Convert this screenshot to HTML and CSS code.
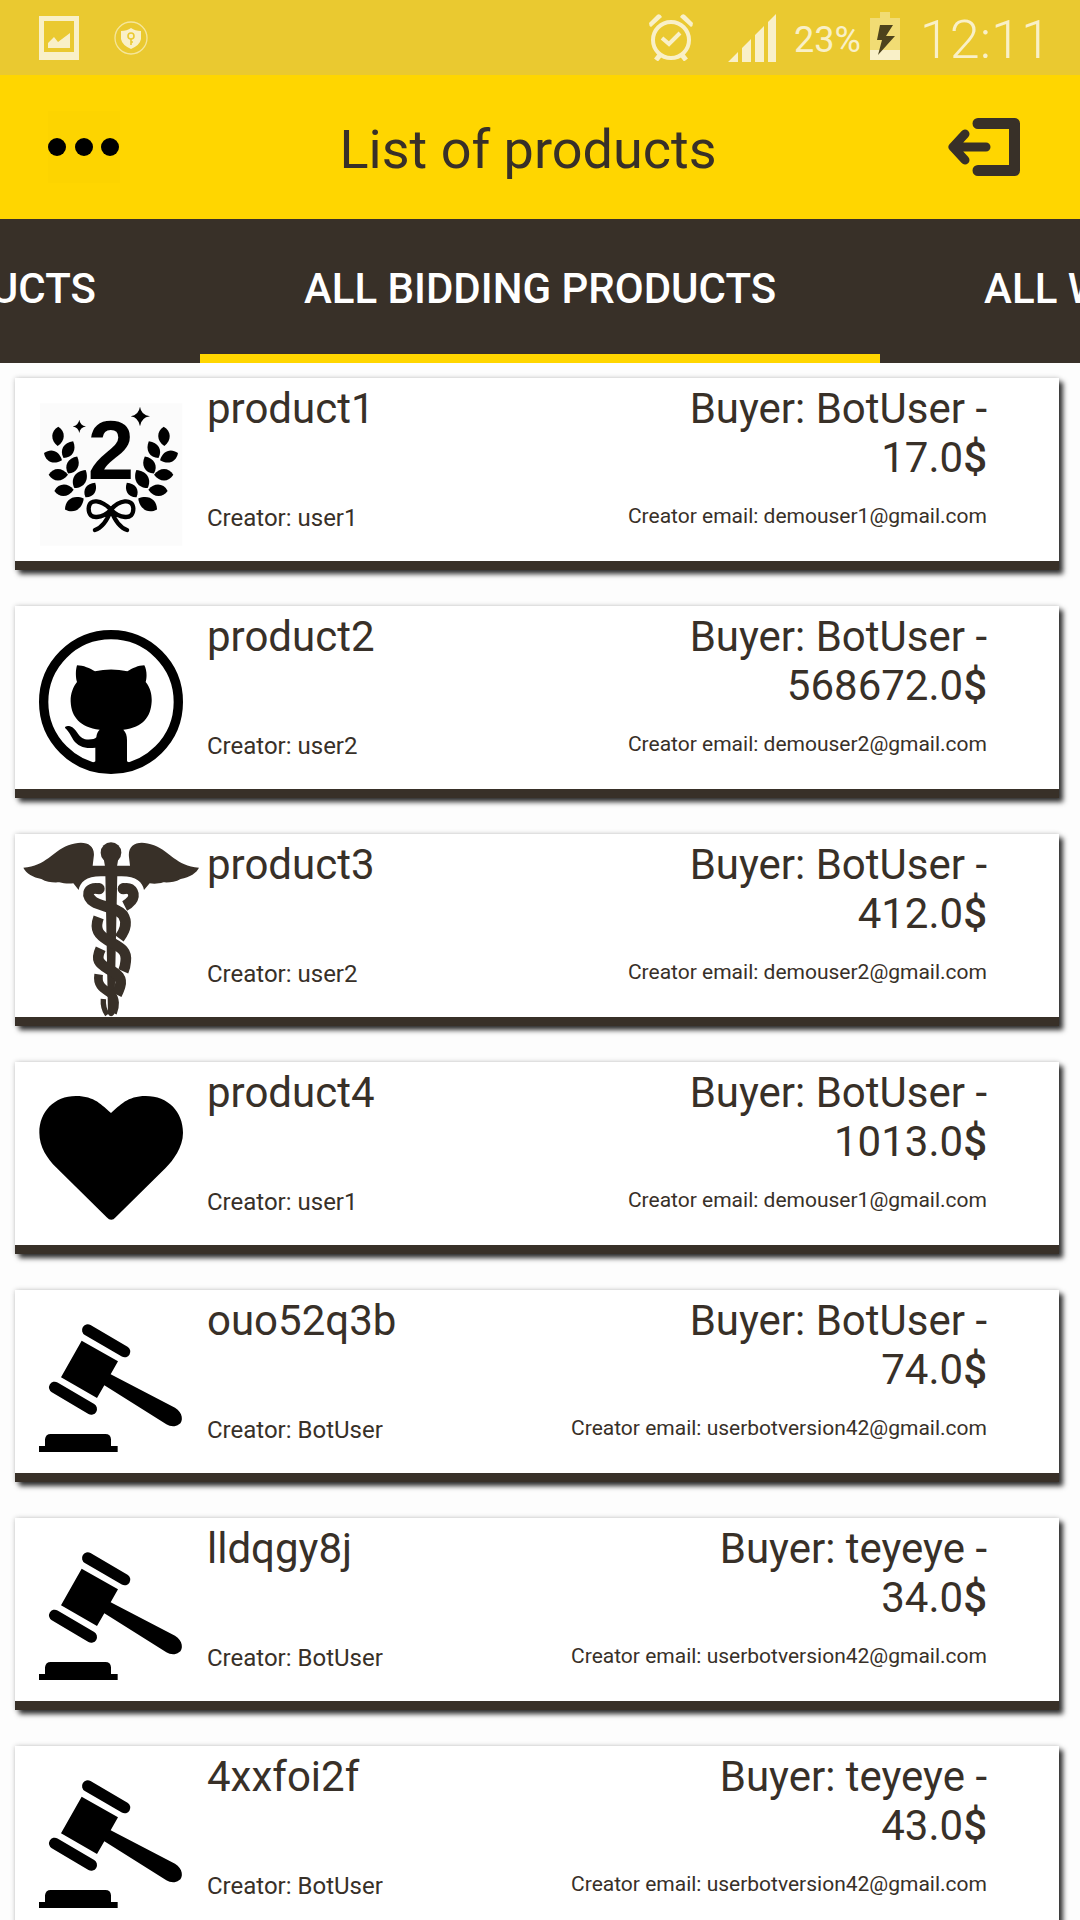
FILE: index.html
```html
<!DOCTYPE html>
<html lang="en">
<head>
<meta charset="utf-8">
<meta name="viewport" content="width=device-width, initial-scale=1">
<title>List of products</title>
<link rel="stylesheet" href="styles.css">
</head>
<body>
<svg class="sprite" aria-hidden="true">
  <symbol id="octocat" viewBox="69 42 528 525">
    <circle cx="333" cy="306" r="202" fill="none" stroke="#000" stroke-width="28"/>
    <path d="M231 196C250 196 270 205 285 214Q333 203 382 214C397 205 415 196 433 196C441 210 441 232 437 246C452 264 456 285 455 305C452 350 430 382 370 389C378 397 381 407 381 420V484L400 496H268L286 484V443C255 447 235 440 220 420C210 402 205 392 195 384C195 377 207 376 217 382C232 392 235 412 255 418C270 420 285 418 289 412C290 402 293 395 299 389C240 382 214 350 212 305C211 285 218 262 231 246C226 230 227 210 231 196Z"/>
  </symbol>
  <symbol id="caduceus" viewBox="69 66 528 525">
    <g fill="#383028">
      <circle cx="333" cy="98" r="31"/>
      <path d="M310 110H356L350 145H316ZM70 143C140 138 155 95 205 76C250 58 288 70 281 112L278 137H390L387 112C382 70 418 58 462 76C512 95 527 138 597 143C590 158 570 172 542 177C525 187 505 188 490 187C475 192 460 192 449 190L432 210C428 185 405 165 352 169H316C262 165 240 185 236 210L220 190C205 192 190 190 178 187C160 188 140 187 124 177C100 172 78 160 70 143ZM316 160H352L343 582Q333 596 324 582Z"/>
      <circle cx="297" cy="206" r="17"/>
      <circle cx="370" cy="206" r="17"/>
    </g>
    <g fill="none" stroke="#383028" stroke-width="32">
      <path d="M297 206C260 200 256 230 282 246C305 260 350 262 369 285C384 308 373 335 358 355"/>
      <path d="M370 206C399 200 408 226 394 242Q386 252 374 258"/>
      <path d="M296 292C282 330 297 345 325 362C360 382 382 390 377 425Q376 440 370 454"/>
      <path d="M302 386C286 420 297 430 325 447C355 463 368 475 360 500Q356 512 350 524"/>
      <path d="M296 463C290 500 315 508 333 522C347 536 346 560 338 578" stroke-width="26"/>
      <path d="M310 537Q308 565 322 584" stroke-width="16"/>
    </g>
  </symbol>
  <symbol id="heart" viewBox="69 60 528 525">
    <path d="M333 189C360 166 382 138 437 138C505 138 549 186 549 248C549 292 520 330 496 355L347 502Q334 517 320 502L168 352C142 325 118 292 118 248C118 186 162 138 228 138C284 138 306 166 333 189Z"/>
  </symbol>
  <symbol id="gavel" viewBox="69 84 528 525">
    <path d="M245 212L354 274L332 313L525 413C549 427 551 455 537 463C525 472 511 470 499 463L313 346L291 384L183 322ZM117 528H135V508Q137 492 152 492H316Q332 492 333 508V528H353V546H117Z"/>
    <path d="M263 180L374 245M164 352L274 417" stroke="#000" stroke-width="34" stroke-linecap="round"/>
  </symbol>
</svg>

<div class="app">
  <div class="status">
    <div class="status-group notices">
      <svg class="notice-photo" viewBox="0 0 40 44" aria-hidden="true"><path fill-rule="evenodd" d="M0 0H40V44H0ZM5 5V36H35V5Z" fill="#f9f0c8"/><path d="M9 32V27L15 21L19 26L31 17V32Z" fill="#f9f0c8"/></svg>
      <svg class="notice-shield" viewBox="0 0 34 34" aria-hidden="true"><circle cx="17" cy="17" r="16" fill="none" stroke="#f5e69b" stroke-width="1.3"/><path d="M17 7Q21 10 27 10V18Q26 24 17 28Q8 24 7 18V10Q13 10 17 7Z" fill="#f9f0c8"/><g fill="none" stroke="#eac930" stroke-width="1.6"><circle cx="17" cy="15" r="3"/><path d="M17 18V24M17 21H19"/></g></svg>
    </div>
    <div class="status-group">
      <svg class="alarm" viewBox="0 0 44 47" aria-hidden="true"><g fill="none" stroke="#f9f0c8"><circle cx="22" cy="26" r="18" stroke-width="4"/><path d="M13 24L20 30L31 19" stroke-width="4"/><path d="M11 41L7 46M33 41L37 46" stroke-width="5"/></g><path d="M0 9L8 1Q11 -1 13 3L2 13Q0 12 0 9ZM44 9L36 1Q33 -1 31 3L42 13Q44 12 44 9Z" fill="#f9f0c8"/></svg>
      <svg class="signal" viewBox="0 0 48 48" aria-hidden="true"><path d="M0 48L10 38V48ZM14 34L23 25V48H14ZM27 21L36 12V48H27ZM40 8L48 0V48H40Z" fill="#f9f0c8"/></svg>
      <span class="percent">23%</span>
      <svg class="battery" viewBox="0 0 30 48" aria-hidden="true"><path d="M10 0H20V6H30V48H0V6H10Z" fill="#f1dc74"/><path d="M0 38H30V48H0Z" fill="#f9f0c8"/><path d="M10 13H23L16 24H25L8 43L12 28H7Z" fill="#4d431c"/></svg>
      <time class="clock">12:11</time>
    </div>
  </div>

  <header class="header">
    <button class="icon-button" type="button" aria-label="Menu"><svg viewBox="0 0 72 72" aria-hidden="true"><path d="M0 0H72V72H0Z" fill="#fdd400"/><circle cx="9" cy="36" r="9"/><circle cx="36" cy="36" r="9"/><circle cx="62" cy="36" r="9"/></svg></button>
    <h1 class="title">List of products</h1>
    <button class="icon-button" type="button" aria-label="Log out"><svg viewBox="0 0 72 72" aria-hidden="true"><path d="M30 12.500H66.500V59.500H30" fill="none" stroke="#383028" stroke-width="11" stroke-linecap="round" stroke-linejoin="round"/><path d="M5 36H38M17 23L5 36L17 49" fill="none" stroke="#383028" stroke-width="9" stroke-linecap="round" stroke-linejoin="round"/></svg></button>
  </header>

  <nav class="tabs">
    <div class="tab-slot before"><button class="tab" type="button">ALL PRODUCTS</button></div>
    <button class="tab active" type="button" aria-current="page">ALL BIDDING PRODUCTS</button>
    <div class="tab-slot"><button class="tab" type="button">ALL WON PRODUCTS</button></div>
  </nav>

  <main class="list">
    <article class="card">
      <svg class="thumb" viewBox="69 63 528 525" aria-hidden="true">
        <defs>
          <path id="leaf" d="M-29 0C-15 -23 12 -23 29 0C12 23 -15 23 -29 0Z"/>
          <g id="branch">
            <use href="#leaf" transform="translate(174 214) rotate(92)"/>
            <use href="#leaf" transform="translate(205 254) rotate(-60)"/>
            <use href="#leaf" transform="translate(159 275) rotate(22)"/>
            <use href="#leaf" transform="translate(218 300) rotate(-62)"/>
            <use href="#leaf" transform="translate(175 329)"/>
            <use href="#leaf" transform="translate(240 342) rotate(-58) scale(1.1)"/>
            <use href="#leaf" transform="translate(192 376) rotate(-4)"/>
            <use href="#leaf" transform="translate(271 375) rotate(-56) scale(.9)"/>
            <use href="#leaf" transform="translate(223 417) rotate(-30) scale(1.12)"/>
          </g>
        </defs>
        <rect x="120" y="115" width="427" height="427" fill="#fbfbfb"/>
        <use href="#branch"/>
        <use href="#branch" transform="translate(666 0) scale(-1 1)"/>
        <path d="M238 164Q240 181 258 184Q240 188 238 204Q235 188 218 184Q235 181 238 164ZM420 125Q423 150 450 154Q423 158 420 184Q416 158 392 154Q416 150 420 125Z"/>
        <path d="M333 434C305 405 268 398 266 430C265 470 310 458 333 434C356 405 398 398 400 430C401 470 356 458 333 434M333 436C322 465 308 488 285 495M333 436C344 465 358 488 381 495" fill="none" stroke="#000" stroke-width="13" stroke-linecap="round"/>
        <text x="333" y="343" class="medal-digit">2</text>
      </svg>
      <div class="info"><h2 class="name">product1</h2><p class="creator">Creator: user1</p></div>
      <div class="info sale"><p class="buyer">Buyer: BotUser -<br>17.0<span class="currency">$</span></p><p class="email">Creator email: demouser1@gmail.com</p></div></article>
    <article class="card"><svg class="thumb" aria-hidden="true"><use href="#octocat"/></svg>
      <div class="info"><h2 class="name">product2</h2><p class="creator">Creator: user2</p></div>
      <div class="info sale"><p class="buyer">Buyer: BotUser -<br>568672.0<span class="currency">$</span></p><p class="email">Creator email: demouser2@gmail.com</p></div></article>
    <article class="card"><svg class="thumb" aria-hidden="true"><use href="#caduceus"/></svg>
      <div class="info"><h2 class="name">product3</h2><p class="creator">Creator: user2</p></div>
      <div class="info sale"><p class="buyer">Buyer: BotUser -<br>412.0<span class="currency">$</span></p><p class="email">Creator email: demouser2@gmail.com</p></div></article>
    <article class="card"><svg class="thumb" aria-hidden="true"><use href="#heart"/></svg>
      <div class="info"><h2 class="name">product4</h2><p class="creator">Creator: user1</p></div>
      <div class="info sale"><p class="buyer">Buyer: BotUser -<br>1013.0<span class="currency">$</span></p><p class="email">Creator email: demouser1@gmail.com</p></div></article>
    <article class="card"><svg class="thumb" aria-hidden="true"><use href="#gavel"/></svg>
      <div class="info"><h2 class="name">ouo52q3b</h2><p class="creator">Creator: BotUser</p></div>
      <div class="info sale"><p class="buyer">Buyer: BotUser -<br>74.0<span class="currency">$</span></p><p class="email">Creator email: userbotversion42@gmail.com</p></div></article>
    <article class="card"><svg class="thumb" aria-hidden="true"><use href="#gavel"/></svg>
      <div class="info"><h2 class="name">lldqgy8j</h2><p class="creator">Creator: BotUser</p></div>
      <div class="info sale"><p class="buyer">Buyer: teyeye -<br>34.0<span class="currency">$</span></p><p class="email">Creator email: userbotversion42@gmail.com</p></div></article>
    <article class="card"><svg class="thumb" aria-hidden="true"><use href="#gavel"/></svg>
      <div class="info"><h2 class="name">4xxfoi2f</h2><p class="creator">Creator: BotUser</p></div>
      <div class="info sale"><p class="buyer">Buyer: teyeye -<br>43.0<span class="currency">$</span></p><p class="email">Creator email: userbotversion42@gmail.com</p></div></article>
  </main>
</div>
</body>
</html>
```
FILE: styles.css
```css
* {
  box-sizing: border-box;
}

body {
  margin: 0;
  background: #fdfdfd;
  color: #383028;
  font-family: Roboto, "Liberation Sans", sans-serif;
}

h1,
h2,
p {
  margin: 0;
  font-weight: 400;
}

button {
  padding: 0;
  border: 0;
  background: none;
  font-family: inherit;
  cursor: pointer;
}

svg {
  display: block;
  flex: none;
}

.sprite {
  position: absolute;
  width: 0;
  height: 0;
}

.medal-digit {
  font-family: "Liberation Sans", sans-serif;
  font-size: 250px;
  font-weight: 700;
  text-anchor: middle;
}

.app {
  display: flex;
  flex-direction: column;
  height: 100vh;
  overflow: hidden;
}

/* Status bar */
.status {
  display: flex;
  flex: none;
  align-items: center;
  justify-content: space-between;
  height: 75px;
  padding: 0 29px 0 39px;
  background: #eac930;
  color: #f9f0c8;
}

.status-group {
  display: flex;
  align-items: center;
}

.notices {
  gap: 35px;
}

.notice-photo {
  width: 40px;
  height: 44px;
}

.notice-shield {
  width: 34px;
  height: 34px;
}

.alarm {
  width: 44px;
  height: 47px;
  margin-right: 35px;
}

.signal {
  width: 48px;
  height: 48px;
  margin-right: 18px;
}

.percent {
  padding-top: 4px;
  font-size: 36px;
  line-height: 42px;
}

.battery {
  width: 30px;
  height: 48px;
  margin: 0 20px 4px 9px;
}

.clock {
  padding-top: 4px;
  font-size: 54px;
  font-weight: 300;
  line-height: 64px;
}

/* App header */
.header {
  display: flex;
  flex: none;
  align-items: center;
  height: 144px;
  padding: 0 60px 0 48px;
  background: #ffd600;
}

.icon-button,
.icon-button svg {
  width: 72px;
  height: 72px;
}

.title {
  flex: 1;
  padding: 5px 12px 0 0;
  font-size: 54px;
  line-height: 64px;
  text-align: center;
}

/* Scrolling tabs, the selected one in the middle */
.tabs {
  display: grid;
  flex: none;
  grid-template-columns: minmax(0, 1fr) auto minmax(0, 1fr);
  height: 144px;
  background: #383028;
}

.tab-slot {
  display: flex;
  overflow: hidden;
}

.before {
  justify-content: flex-end;
}

.tab {
  flex: none;
  padding: 4px 104px 0;
  border-bottom: 9px solid transparent;
  color: #fff;
  font-size: 42px;
  font-weight: 500;
  line-height: 50px;
  white-space: nowrap;
}

.active {
  border-bottom-color: #ffd600;
}

/* Product list */
.list {
  display: flex;
  flex: 1;
  flex-direction: column;
  gap: 36px;
  min-height: 0;
  padding: 15px 21px 15px 15px;
  overflow-y: auto;
  scrollbar-width: none;
}

.card {
  display: flex;
  flex: none;
  height: 192px;
  padding-left: 8px;
  border-bottom: 9px solid #383028;
  background: #fff;
  box-shadow: 4px 4px 5px rgba(0, 0, 0, 0.8), 0 0 5px rgba(0, 0, 0, 0.2);
}

.thumb {
  width: 176px;
  height: 175px;
  margin: 8px 8px 0 0;
}

.info {
  display: flex;
  flex-direction: column;
  justify-content: space-between;
  padding: 6px 0 29px;
}

.sale {
  flex: 1;
  padding-right: 72px;
  text-align: right;
}

.name,
.buyer {
  font-size: 42px;
  line-height: 49px;
}

.currency {
  font-weight: 500;
}

.creator {
  font-size: 24px;
  line-height: 28px;
}

.email {
  font-size: 21px;
  line-height: 32px;
}
```
